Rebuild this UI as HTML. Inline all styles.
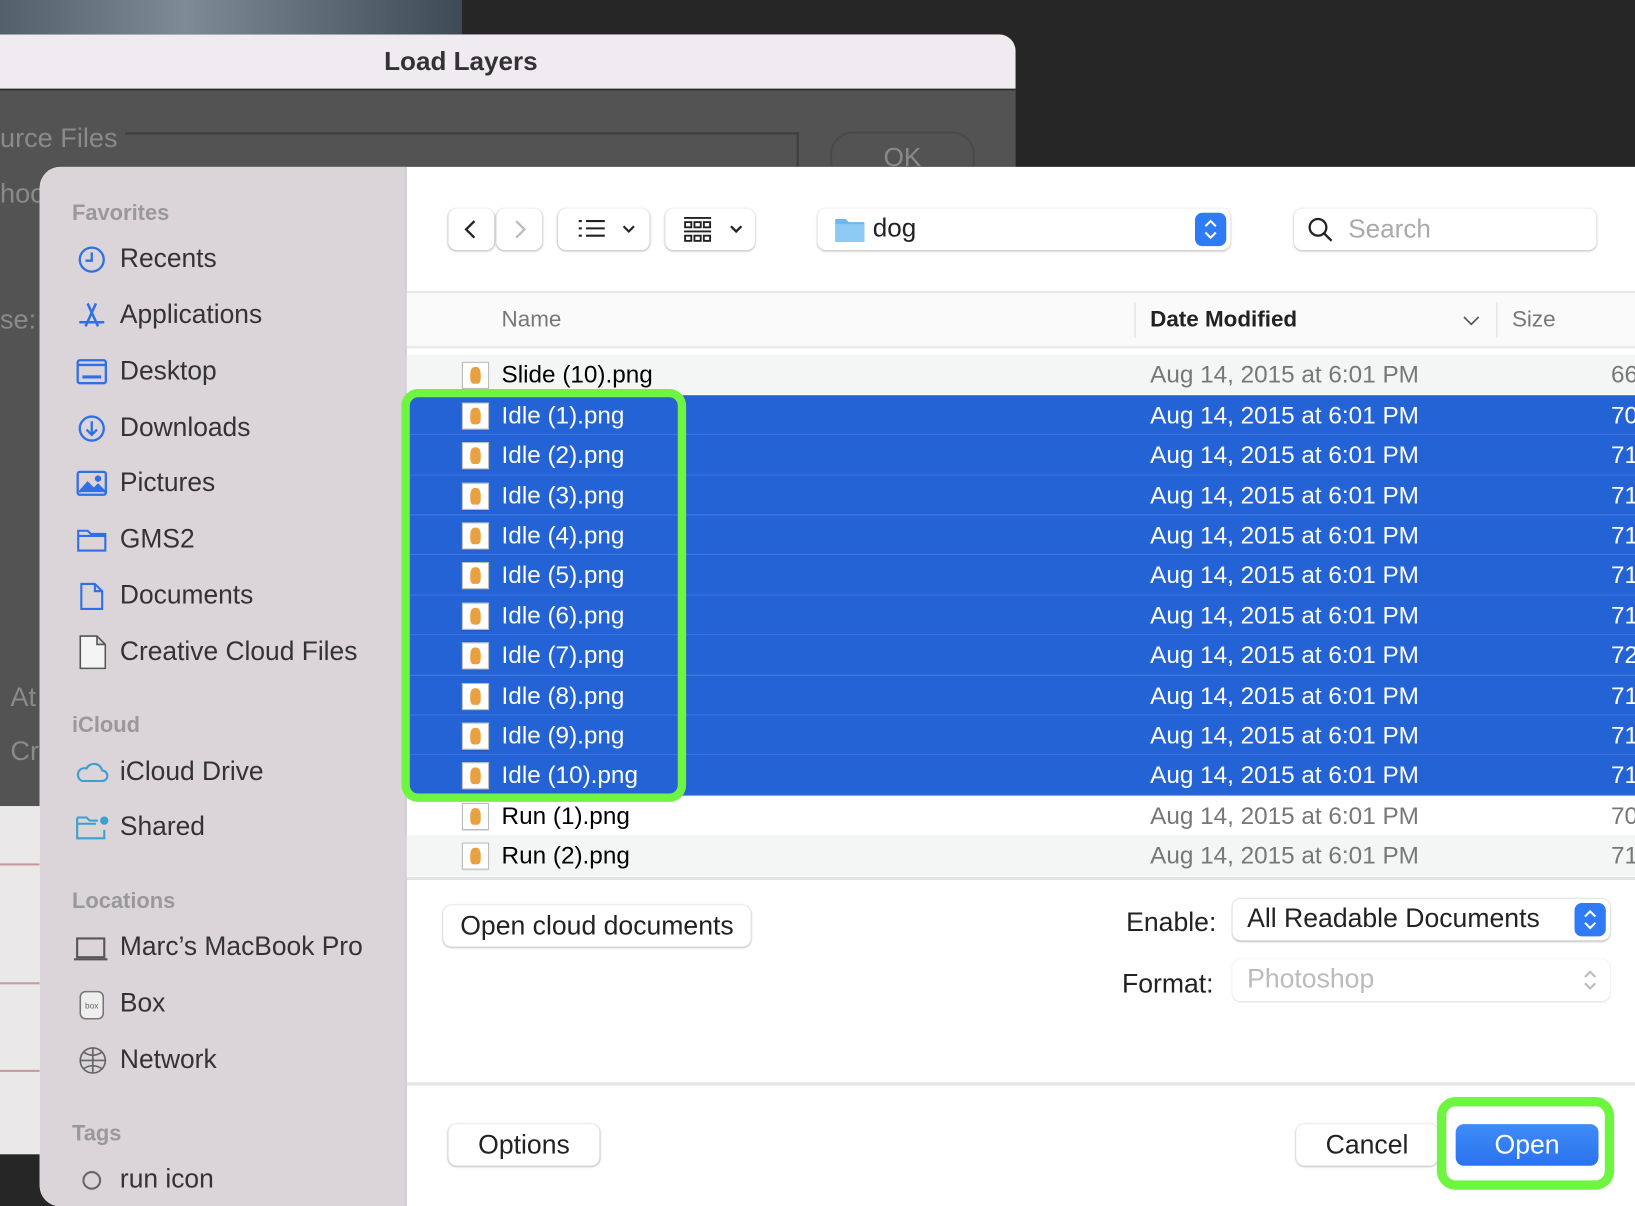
<!DOCTYPE html>
<html><head><meta charset="utf-8"><style>
*{margin:0;padding:0;box-sizing:border-box}
html,body{width:1635px;height:1206px;overflow:hidden;background:#262626}
#w{position:absolute;left:0;top:0;width:1568px;height:1157px;transform:scale(1.04273);transform-origin:0 0;font-family:"Liberation Sans",sans-serif}
.a{position:absolute}
.sb{font-size:25.3px;color:#333}
.sbh{font-size:20px;color:#999;font-weight:bold}
.btn{position:absolute;background:#fff;border-radius:8px;box-shadow:0 0.5px 2px rgba(0,0,0,.35);}
.row{position:absolute;left:390px;width:1178px;height:38.4px;font-size:23.3px;line-height:38px}
.row .n{position:absolute;left:91px}
.row .d{position:absolute;left:713px;color:#777}
.row .s{position:absolute;left:1155px;color:#777}
.row .ic{position:absolute;left:53px;top:7px;width:26px;height:26px;background:#fff;border:1px solid #bbb;box-shadow:0 1px 1px rgba(0,0,0,.2)}
.row .ic:after{content:"";position:absolute;left:7px;top:4px;width:10px;height:16px;background:#e8a040;border-radius:40% 40% 30% 30%}
.sel{background:#2463d6;border-bottom:1px solid #3a72dc}
.sel .n,.sel .d,.sel .s{color:#fff}
.bt{font-size:25.5px;color:#222;text-align:center;line-height:40px}
</style></head><body><div id="w">
<div class="a" style="left:0;top:0;width:443px;height:33px;background:linear-gradient(90deg,#52606c,#7d8b97 40%,#3e4a55)"></div>
<div class="a" style="left:0;top:33px;width:974px;height:760px;background:#535353;border-radius:0 16px 0 0;overflow:hidden">
 <div class="a" style="left:0;top:0;width:974px;height:54px;background:#f0eaf1;border-bottom:2px solid #2a2a2a;text-align:center;font-size:25px;font-weight:bold;color:#333;line-height:52px;padding-right:90px">Load Layers</div>
 <div class="a" style="left:0;top:84px;font-size:26px;color:#8a8a8a">urce Files</div>
 <div class="a" style="left:120px;top:94px;width:646px;height:40px;border-top:2px solid #3e3e3e;border-right:2px solid #3e3e3e"></div>
 <div class="a" style="left:796px;top:93px;width:139px;height:50px;border:2px solid #4a4a4a;border-radius:22px;color:#8a8a8a;font-size:25px;text-align:center;line-height:46px">OK</div>
 <div class="a" style="left:0;top:137px;font-size:26px;color:#8a8a8a">hoos</div>
 <div class="a" style="left:0;top:258px;font-size:26px;color:#8a8a8a">se:</div>
 <div class="a" style="left:10px;top:620px;font-size:26px;color:#8a8a8a">At</div>
 <div class="a" style="left:10px;top:672px;font-size:26px;color:#8a8a8a">Cr</div>
</div>
<div class="a" style="left:0;top:773px;width:40px;height:334px;background:#ebe8ea"></div>
<div class="a" style="left:0;top:828px;width:40px;height:2px;background:#c79aa0"></div>
<div class="a" style="left:0;top:942px;width:40px;height:2px;background:#c79aa0"></div>
<div class="a" style="left:0;top:1026px;width:40px;height:2px;background:#c79aa0"></div>
<div class="a" style="left:38px;top:160px;width:1530px;height:997px;background:#fff;border-radius:20px 0 0 20px;overflow:hidden">
 <div class="a" style="left:0;top:0;width:352px;height:997px;background:#dbd5da;border-right:1px solid #c8c4c8"></div>
</div>
<div class="a sbh" style="left:69px;top:193px;font-size:21px">Favorites</div>
<svg class="a" style="left:74px;top:235px" width="28" height="28" viewBox="0 0 28 28" fill="none" stroke="#2f6fe8" stroke-width="2.2"><circle cx="14" cy="14" r="11.5"/><path d="M14 7v8h-6"/></svg>
<div class="a sb" style="left:115px;top:234px">Recents</div>
<svg class="a" style="left:74px;top:288px" width="28" height="28" viewBox="0 0 28 28" fill="none" stroke="#2f6fe8" stroke-width="2.4"><path d="M10 3l10 22M18 3L8 25M2 21h24"/></svg>
<div class="a sb" style="left:115px;top:288px">Applications</div>
<svg class="a" style="left:73px;top:344px" width="30" height="26" viewBox="0 0 30 26" fill="none" stroke="#2f6fe8" stroke-width="2.2"><rect x="1.5" y="1.5" width="27" height="22" rx="2"/><path d="M2 6h26"/><rect x="6" y="16" width="18" height="3" fill="#2f6fe8" stroke="none"/></svg>
<div class="a sb" style="left:115px;top:342px">Desktop</div>
<svg class="a" style="left:74px;top:397px" width="28" height="28" viewBox="0 0 28 28" fill="none" stroke="#2f6fe8" stroke-width="2.2"><circle cx="14" cy="14" r="11.5"/><path d="M14 7v13M9 15l5 5 5-5"/></svg>
<div class="a sb" style="left:115px;top:396px">Downloads</div>
<svg class="a" style="left:73px;top:451px" width="30" height="26" viewBox="0 0 30 26" fill="none" stroke="#2f6fe8" stroke-width="2.2"><rect x="1.5" y="1.5" width="27" height="22" rx="2"/><path d="M3 21l8-9 6 6 4-4 7 7" fill="#2f6fe8"/><circle cx="21" cy="8" r="2" fill="#2f6fe8"/></svg>
<div class="a sb" style="left:115px;top:449px">Pictures</div>
<svg class="a" style="left:73px;top:505px" width="30" height="26" viewBox="0 0 30 26" fill="none" stroke="#2f6fe8" stroke-width="2"><path d="M2 4h9l3 3h14v16H2zM2 9h26"/></svg>
<div class="a sb" style="left:115px;top:503px">GMS2</div>
<svg class="a" style="left:76px;top:558px" width="24" height="28" viewBox="0 0 24 28" fill="none" stroke="#2f6fe8" stroke-width="2"><path d="M2 2h13l7 7v17H2zM15 2v7h7"/></svg>
<div class="a sb" style="left:115px;top:557px">Documents</div>
<svg class="a" style="left:76px;top:609px" width="26" height="33" viewBox="0 0 26 33" fill="#f4f4f4" stroke="#555" stroke-width="1.5"><path d="M1 1h16l8 8v23H1zM17 1v8h8"/></svg>
<div class="a sb" style="left:115px;top:611px">Creative Cloud Files</div>
<div class="a sbh" style="left:69px;top:684px;font-size:21px">iCloud</div>
<svg class="a" style="left:72px;top:729px" width="32" height="22" viewBox="0 0 32 22" fill="none" stroke="#3aa0d0" stroke-width="2"><path d="M7 20h19a5 5 0 0 0 0-10 8 8 0 0 0-15-2A6 6 0 0 0 7 20z"/></svg>
<div class="a sb" style="left:115px;top:726px">iCloud Drive</div>
<svg class="a" style="left:72px;top:780px" width="34" height="28" viewBox="0 0 34 28" fill="none" stroke="#3aa0d0" stroke-width="2"><path d="M2 4h9l3 3h8M2 4v20h26v-8M2 10h18"/><circle cx="28" cy="7" r="3" fill="#3aa0d0"/></svg>
<div class="a sb" style="left:115px;top:779px">Shared</div>
<div class="a sbh" style="left:69px;top:853px;font-size:21px">Locations</div>
<svg class="a" style="left:70px;top:897px" width="34" height="26" viewBox="0 0 34 26" fill="none" stroke="#555" stroke-width="2"><rect x="4" y="3" width="26" height="18"/><path d="M1 23h32"/></svg>
<div class="a sb" style="left:115px;top:894px">Marc’s MacBook Pro</div>
<svg class="a" style="left:76px;top:950px" width="24" height="28" viewBox="0 0 24 28" fill="#eee" stroke="#777" stroke-width="1.5"><rect x="1" y="1" width="22" height="26" rx="5"/><text x="12" y="17" font-size="8" text-anchor="middle" fill="#666" stroke="none" font-family="Liberation Sans">box</text></svg>
<div class="a sb" style="left:115px;top:948px">Box</div>
<svg class="a" style="left:75px;top:1003px" width="28" height="28" viewBox="0 0 28 28" fill="none" stroke="#666" stroke-width="1.6"><circle cx="14" cy="14" r="12"/><path d="M2 14h24M14 2v24M5 6c6 4 12 4 18 0M5 22c6-4 12-4 18 0"/></svg>
<div class="a sb" style="left:115px;top:1002px">Network</div>
<div class="a sbh" style="left:69px;top:1076px;font-size:21px">Tags</div>
<div class="a" style="left:79px;top:1123px;width:18px;height:18px;border:2px solid #666;border-radius:50%"></div>
<div class="a sb" style="left:115px;top:1117px">run icon</div>
<div class="btn" style="left:430px;top:200px;width:44px;height:40px"><svg width="44" height="40"><path d="M25 12l-8 8 8 8" fill="none" stroke="#222" stroke-width="2.2"/></svg></div>
<div class="btn" style="left:476px;top:200px;width:44px;height:40px"><svg width="44" height="40"><path d="M19 12l8 8-8 8" fill="none" stroke="#bbb" stroke-width="2.2"/></svg></div>
<div class="btn" style="left:535px;top:200px;width:88px;height:40px"><svg width="88" height="40" fill="none" stroke="#222" stroke-width="2"><path d="M27 12h18M27 19h18M27 26h18M20 12h3M20 19h3M20 26h3M63 17l5 5 5-5" /></svg></div>
<div class="btn" style="left:638px;top:200px;width:86px;height:40px"><svg width="86" height="40" fill="none" stroke="#222" stroke-width="1.8"><path d="M18 9h26M18 22h26"/><rect x="19" y="13" width="6" height="5"/><rect x="28" y="13" width="6" height="5"/><rect x="37" y="13" width="6" height="5"/><rect x="19" y="26" width="6" height="5"/><rect x="28" y="26" width="6" height="5"/><rect x="37" y="26" width="6" height="5"/><path d="M63 17l5 5 5-5" stroke-width="2.2"/></svg></div>
<div class="btn" style="left:784px;top:200px;width:396px;height:40px"><svg class="a" style="left:16px;top:7px" width="30" height="26"><path d="M1 3h10l3 3h15v19H1z" fill="#6eb6ee"/><path d="M1 8h28v17H1z" fill="#8fcaf5"/></svg><span class="a" style="left:53px;top:5px;font-size:25px;color:#222">dog</span><div class="a" style="right:4px;top:4px;width:30px;height:32px;background:#2f7bf5;border-radius:7px"><svg width="30" height="32" fill="none" stroke="#fff" stroke-width="2"><path d="M10 13l5-5 5 5M10 19l5 5 5-5"/></svg></div></div>
<div class="btn" style="left:1241px;top:200px;width:290px;height:40px"><svg class="a" style="left:12px;top:7px" width="28" height="28" fill="none" stroke="#222" stroke-width="2.2"><circle cx="11" cy="11" r="8"/><path d="M17 17l7 7"/></svg><span class="a" style="left:52px;top:6px;font-size:25px;color:#aaa">Search</span></div>
<div class="a" style="left:390px;top:279px;width:1178px;height:55px;background:#fafafa;border-top:2px solid #e6e6e6;border-bottom:2px solid #e6e6e6"></div>
<div class="a" style="left:481px;top:294px;font-size:21.5px;color:#777">Name</div>
<div class="a" style="left:1088px;top:290px;width:1px;height:34px;background:#ddd"></div>
<div class="a" style="left:1103px;top:294px;font-size:21.5px;color:#222;font-weight:bold">Date Modified</div>
<svg class="a" style="left:1402px;top:300px" width="18" height="14"><path d="M2 4l7 7 7-7" fill="none" stroke="#555" stroke-width="1.6"/></svg>
<div class="a" style="left:1435px;top:290px;width:1px;height:34px;background:#ddd"></div>
<div class="a" style="left:1450px;top:294px;font-size:21.5px;color:#777">Size</div>
<div class="row" style="top:340px;background:#f4f5f5"><div class="ic"></div><span class="n">Slide (10).png</span><span class="d">Aug 14, 2015 at 6:01 PM</span><span class="s">66</span></div>
<div class="row sel" style="top:378.8px"><div class="ic"></div><span class="n">Idle (1).png</span><span class="d">Aug 14, 2015 at 6:01 PM</span><span class="s">70</span></div>
<div class="row sel" style="top:417.2px"><div class="ic"></div><span class="n">Idle (2).png</span><span class="d">Aug 14, 2015 at 6:01 PM</span><span class="s">71</span></div>
<div class="row sel" style="top:455.6px"><div class="ic"></div><span class="n">Idle (3).png</span><span class="d">Aug 14, 2015 at 6:01 PM</span><span class="s">71</span></div>
<div class="row sel" style="top:494px"><div class="ic"></div><span class="n">Idle (4).png</span><span class="d">Aug 14, 2015 at 6:01 PM</span><span class="s">71</span></div>
<div class="row sel" style="top:532.4px"><div class="ic"></div><span class="n">Idle (5).png</span><span class="d">Aug 14, 2015 at 6:01 PM</span><span class="s">71</span></div>
<div class="row sel" style="top:570.8px"><div class="ic"></div><span class="n">Idle (6).png</span><span class="d">Aug 14, 2015 at 6:01 PM</span><span class="s">71</span></div>
<div class="row sel" style="top:609.2px"><div class="ic"></div><span class="n">Idle (7).png</span><span class="d">Aug 14, 2015 at 6:01 PM</span><span class="s">72</span></div>
<div class="row sel" style="top:647.6px"><div class="ic"></div><span class="n">Idle (8).png</span><span class="d">Aug 14, 2015 at 6:01 PM</span><span class="s">71</span></div>
<div class="row sel" style="top:686px"><div class="ic"></div><span class="n">Idle (9).png</span><span class="d">Aug 14, 2015 at 6:01 PM</span><span class="s">71</span></div>
<div class="row sel" style="top:724.4px"><div class="ic"></div><span class="n">Idle (10).png</span><span class="d">Aug 14, 2015 at 6:01 PM</span><span class="s">71</span></div>
<div class="row" style="top:762.8px"><div class="ic"></div><span class="n">Run (1).png</span><span class="d">Aug 14, 2015 at 6:01 PM</span><span class="s">70</span></div>
<div class="row" style="top:801.2px;background:#f4f5f5"><div class="ic"></div><span class="n">Run (2).png</span><span class="d">Aug 14, 2015 at 6:01 PM</span><span class="s">71</span></div>
<div class="a" style="left:390px;top:841px;width:1178px;height:3px;background:#e4e4e4"></div>
<div class="btn bt" style="left:425px;top:868px;width:295px;height:40px">Open cloud documents</div>
<div class="a" style="left:1080px;top:871px;font-size:25.5px;color:#222">Enable:</div>
<div class="btn" style="left:1182px;top:862px;width:362px;height:40px"><span class="a" style="left:14px;top:5px;font-size:25.5px;color:#222">All Readable Documents</span><div class="a" style="right:4px;top:4px;width:30px;height:32px;background:#2f7bf5;border-radius:7px"><svg width="30" height="32" fill="none" stroke="#fff" stroke-width="2"><path d="M10 13l5-5 5 5M10 19l5 5 5-5"/></svg></div></div>
<div class="a" style="left:1076px;top:930px;font-size:25.5px;color:#222">Format:</div>
<div class="btn" style="left:1182px;top:920px;width:362px;height:40px;box-shadow:0 0.5px 2px rgba(0,0,0,.15)"><span class="a" style="left:14px;top:5px;font-size:25.5px;color:#bbb">Photoshop</span><svg class="a" style="right:4px;top:4px" width="30" height="32" fill="none" stroke="#bbb" stroke-width="2"><path d="M10 13l5-5 5 5M10 19l5 5 5-5"/></svg></div>
<div class="a" style="left:390px;top:1038px;width:1178px;height:3px;background:#e4e4e4"></div>
<div class="btn bt" style="left:430px;top:1078px;width:145px;height:40px">Options</div>
<div class="btn bt" style="left:1243px;top:1078px;width:136px;height:40px">Cancel</div>
<div class="a bt" style="left:1396px;top:1078px;width:137px;height:40px;background:linear-gradient(#3f8cf7,#2a72ef);border-radius:8px;color:#fff">Open</div>
<div class="a" style="left:385px;top:373px;width:273px;height:396px;border:8px solid #6ef542;border-radius:16px"></div>
<div class="a" style="left:1378px;top:1052px;width:170px;height:89px;border:9px solid #6ef542;border-radius:18px"></div>
</div></body></html>
